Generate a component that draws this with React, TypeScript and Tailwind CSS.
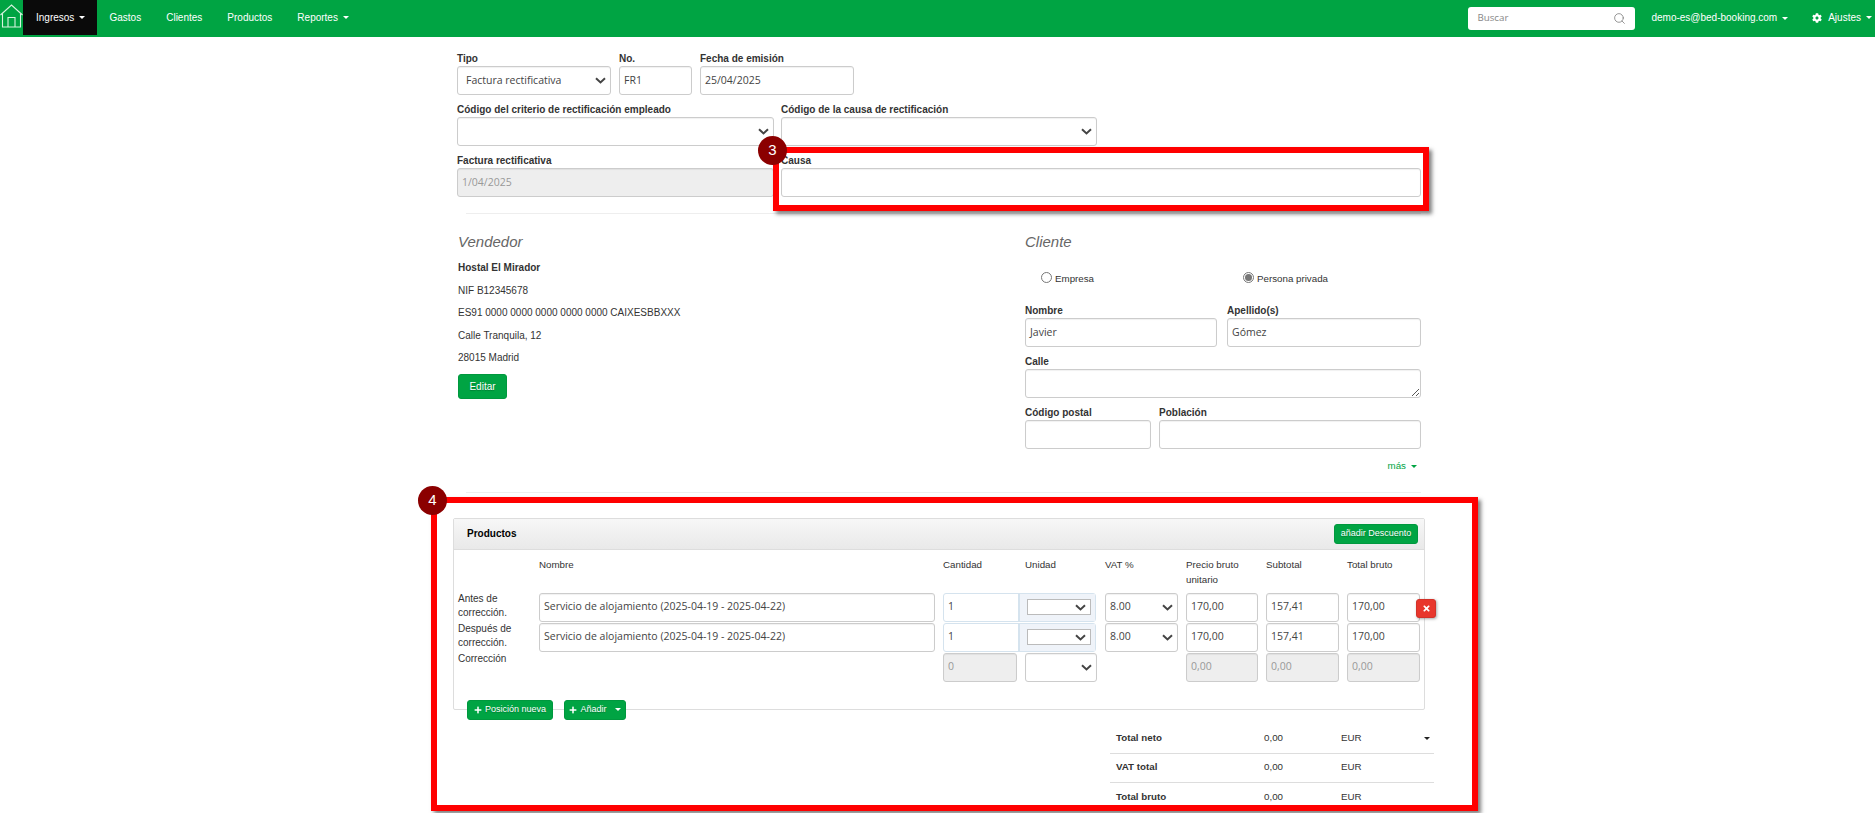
import React from "react";
import { Search } from "lucide-react";
import { FaCog, FaPlus, FaTimes } from "react-icons/fa";

const Caret = ({ c = "border-t-white" }: { c?: string }) => (
  <span className={`inline-block w-0 h-0 ml-[5px] align-middle border-x-[3px] border-x-transparent border-t-[3px] ${c}`} />
);

const Chevron = () => (
  <svg width="11" height="7" viewBox="0 0 11 7" className="shrink-0">
    <path d="M1 1.2 L5.5 5.4 L10 1.2" fill="none" stroke="#444" strokeWidth="2" />
  </svg>
);

const inputFont = "font-['Open_Sans',sans-serif] text-[10.5px] text-[#444]";

const Box = ({ w, h = "h-[29px]", value, disabled, select, className = "" }: { w: string; h?: string; value?: string; disabled?: boolean; select?: boolean; className?: string }) => (
  <div className={`${w} ${h} ${inputFont} ${disabled ? "bg-[#eeeeee] text-[#999]" : "bg-white"} flex items-center justify-between border border-[#cccccc] rounded-[3px] shadow-[inset_0_1px_1px_rgba(0,0,0,0.06)] pl-[4px] pr-[4px] shrink-0 ${className}`}>
    <span className="whitespace-nowrap">{value}</span>
    {select && <Chevron />}
  </div>
);

const Field = ({ label, w, value, disabled, select, pad }: { label: string; w: string; value?: string; disabled?: boolean; select?: boolean; pad?: boolean }) => (
  <div className={`${w} shrink-0`}>
    <div className="h-[13px] leading-[13px] mb-px font-bold text-[10px] text-[#333] whitespace-nowrap">{label}</div>
    <Box w="w-full" value={value} disabled={disabled} select={select} className={pad ? "pl-[8px]" : ""} />
  </div>
);

const HeadCell = ({ children }: { children: React.ReactNode }) => <div className="text-[9.75px] leading-[15px] text-[#333]">{children}</div>;

const RowLabel = ({ children }: { children: React.ReactNode }) => <div className="-mt-px pl-[4px] text-[10px] leading-[14.5px] text-[#333]">{children}</div>;

const Group = ({ value }: { value: string }) => (
  <div className="col-span-2 flex h-[29px] border border-[#d5e3ee] rounded-[3px] w-[153px]">
    <div className={`w-[76px] h-full flex items-center pl-[4px] border-r-2 border-[#d5e3ee] ${inputFont}`}>{value}</div>
    <div className="flex-1 bg-[#eff3f9] flex items-center pl-[7px]">
      <div className="w-[64px] h-[16px] bg-white border border-[#bbbbbb] flex items-center justify-end pr-[4px]"><Chevron /></div>
    </div>
  </div>
);

const GreenBtn = ({ children, className = "" }: { children: React.ReactNode; className?: string }) => (
  <div className={`bg-[#00a443] border border-[#00983e] rounded-[3px] text-white text-[9px] [text-shadow:0_1px_1px_rgba(0,0,0,0.25)] flex items-center justify-center whitespace-nowrap ${className}`}>{children}</div>
);

const TotalRow = ({ label, caret, last }: { label: string; caret?: boolean; last?: boolean }) => (
  <div className={`flex items-center h-[29px] text-[9.75px] text-[#333] ${last ? "" : "border-b border-[#dddddd]"}`}>
    <div className="w-[154px] pl-[6px] font-bold">{label}</div>
    <div className="w-[77px]">0,00</div>
    <div className="w-[83px]">EUR</div>
    {caret && <span className="inline-block w-0 h-0 border-x-[3px] border-x-transparent border-t-[3px] border-t-[#222]" />}
  </div>
);

const NavItem = ({ children }: { children: React.ReactNode }) => <div className="px-[12.5px] flex items-center h-full whitespace-nowrap">{children}</div>;

const Marker = ({ n, className }: { n: string; className: string }) => (
  <div className={`absolute w-[29px] h-[29px] rounded-full bg-[#8b0000] text-white text-[15px] flex items-center justify-center ${className}`}>{n}</div>
);

export default function App() {
  return (
    <div className="relative h-[813px] w-[1875px] overflow-hidden bg-white font-['Liberation_Sans',Arial,sans-serif] text-[#333]">
      {/* Navbar */}
      <div className="h-[37px] bg-[#00a443] flex items-start text-white text-[10px]">
        <svg width="23" height="24" viewBox="0 0 23 24" className="mt-[4px] shrink-0" fill="none" stroke="#d8f3e0" strokeWidth="1.1">
          <path d="M0.5 11 L11.5 1 L22.5 11" />
          <path d="M2.5 9.5 V23 H20.5 V9.5" />
          <path d="M8 23 V13.5 H15 V23" />
        </svg>
        <div className="w-[74px] h-[35px] bg-[#0a0a0a] flex items-center pl-[13px] shrink-0">Ingresos<Caret /></div>
        <div className="flex items-center h-[35px]">
          <NavItem>Gastos</NavItem>
          <NavItem>Clientes</NavItem>
          <NavItem>Productos</NavItem>
          <NavItem>Reportes<Caret /></NavItem>
        </div>
        <div className="ml-auto flex items-center h-[35px]">
          <div className="w-[167px] h-[23px] mt-[1px] bg-white rounded-[3px] flex items-center justify-between pl-[9px] pr-[9px] text-[#888] text-[9.75px] font-['Open_Sans',sans-serif]">
            <span>Buscar</span>
            <Search size={13} strokeWidth={1.4} color="#777" />
          </div>
          <div className="ml-[16px] whitespace-nowrap">demo-es@bed-booking.com<Caret /></div>
          <div className="ml-[24px] mr-[3px] flex items-center whitespace-nowrap"><FaCog size={10} className="mr-[6px]" />Ajustes<Caret /></div>
        </div>
      </div>

      {/* Form */}
      <div className="ml-[457px] w-[964px] pt-[15px]">
        <div className="flex gap-x-[8px]">
          <Field label="Tipo" w="w-[154px]" value="Factura rectificativa" select pad />
          <Field label="No." w="w-[73px]" value="FR1" />
          <Field label="Fecha de emisión" w="w-[154px]" value="25/04/2025" />
        </div>
        <div className="flex gap-x-[7px] mt-[8px]">
          <Field label="Código del criterio de rectificación empleado" w="w-[317px]" select />
          <Field label="Código de la causa de rectificación" w="w-[316px]" select />
        </div>
        <div className="flex gap-x-[7px] mt-[8px]">
          <Field label="Factura rectificativa" w="w-[317px]" value="1/04/2025" disabled />
          <Field label="Causa" w="w-[640px]" />
        </div>
        <div className="h-px bg-[#eeeeee] ml-[9px] mt-[16px]" />

        <div className="flex mt-[18px]">
          <div className="w-[568px] shrink-0">
            <div className="h-[20px] leading-[20px] italic text-[15px] text-[#666] pl-px">Vendedor</div>
            <div className="mt-[5px] text-[10px] leading-[22.6px] pl-px">
              <div className="font-bold">Hostal El Mirador</div>
              <div>NIF B12345678</div>
              <div>ES91 0000 0000 0000 0000 0000 CAIXESBBXXX</div>
              <div>Calle Tranquila, 12</div>
              <div>28015 Madrid</div>
            </div>
            <GreenBtn className="w-[49px] h-[25px] mt-[4px] ml-px text-[10px]">Editar</GreenBtn>
          </div>
          <div className="w-[396px] shrink-0">
            <div className="h-[20px] leading-[20px] italic text-[15px] text-[#666]">Cliente</div>
            <div className="flex items-center h-[14px] mt-[20px] text-[9.75px]">
              <span className="ml-[16px] w-[11px] h-[11px] rounded-full border border-[#777] bg-white -mt-[3px]" />
              <span className="ml-[3px]">Empresa</span>
              <span className="ml-[149px] w-[11px] h-[11px] rounded-full border border-[#777] bg-white flex items-center justify-center -mt-[3px]">
                <span className="w-[7px] h-[7px] rounded-full bg-[#777]" />
              </span>
              <span className="ml-[3px]">Persona privada</span>
            </div>
            <div className="flex gap-x-[10px] mt-[18px]">
              <Field label="Nombre" w="w-[192px]" value="Javier" />
              <Field label="Apellido(s)" w="w-[194px]" value="Gómez" />
            </div>
            <div className="mt-[8px] relative">
              <Field label="Calle" w="w-full" />
              <svg width="8" height="8" viewBox="0 0 8 8" className="absolute right-[2px] bottom-[2px]" stroke="#444" strokeWidth="0.9">
                <path d="M1 8 L8 1 M5 8 L8 5" />
              </svg>
            </div>
            <div className="flex gap-x-[8px] mt-[7.5px]">
              <Field label="Código postal" w="w-[126px]" />
              <Field label="Población" w="w-[262px]" />
            </div>
            <div className="h-[13px] leading-[13px] mt-[10.5px] pr-[4px] text-right text-[9.75px] text-[#00a443]">más<Caret c="border-t-[#00a443]" /></div>
          </div>
        </div>
        <div className="h-px bg-[#eeeeee] ml-[9px] mt-[19.5px]" />

        {/* Products panel */}
        <div className="relative -ml-[4px] w-[972px] h-[192px] mt-[25px] border border-[#dddddd] rounded-[2px]">
          <div className="h-[31px] flex items-center justify-between pl-[13px] pr-[6px] border-b border-[#dddddd] bg-gradient-to-b from-[#f7f7f7] to-[#e9e9e9]">
            <span className="font-bold text-[10px] text-black">Productos</span>
            <GreenBtn className="w-[84px] h-[20px]">añadir Descuento</GreenBtn>
          </div>
          <div className="relative grid grid-cols-[77px_396px_74px_72px_73px_72px_73px_73px] gap-x-[8px] gap-y-px mt-[7px]">
            <div className="h-[35px]" />
            <HeadCell>Nombre</HeadCell>
            <HeadCell>Cantidad</HeadCell>
            <HeadCell>Unidad</HeadCell>
            <HeadCell>VAT %</HeadCell>
            <HeadCell>Precio bruto unitario</HeadCell>
            <HeadCell>Subtotal</HeadCell>
            <HeadCell>Total bruto</HeadCell>

            <RowLabel>Antes de corrección.</RowLabel>
            <Box w="w-full" value="Servicio de alojamiento (2025-04-19 - 2025-04-22)" />
            <Group value="1" />
            <Box w="w-full" value="8.00" select />
            <Box w="w-full" value="170,00" />
            <Box w="w-full" value="157,41" />
            <Box w="w-full" value="170,00" />

            <RowLabel>Después de corrección.</RowLabel>
            <Box w="w-full" value="Servicio de alojamiento (2025-04-19 - 2025-04-22)" />
            <Group value="1" />
            <Box w="w-full" value="8.00" select />
            <Box w="w-full" value="170,00" />
            <Box w="w-full" value="157,41" />
            <Box w="w-full" value="170,00" />

            <RowLabel>Corrección</RowLabel>
            <div />
            <Box w="w-full" value="0" disabled />
            <Box w="w-full" select />
            <div />
            <Box w="w-full" value="0,00" disabled />
            <Box w="w-full" value="0,00" disabled />
            <Box w="w-full" value="0,00" disabled />

            <div className="absolute left-[962px] top-[42px] w-[20px] h-[19px] rounded-[3px] bg-[#e8362c] border border-[#d2322a] flex items-center justify-center text-white shadow-[1px_1px_3px_rgba(0,0,0,0.35)]">
              <FaTimes size={9} />
            </div>
          </div>
        </div>
        <div className="relative flex gap-x-[11px] -mt-[10px] ml-[10px]">
          <GreenBtn className="w-[86px] h-[20px] gap-[3px]"><FaPlus size={8} />Posición nueva</GreenBtn>
          <GreenBtn className="w-[62px] h-[20px] gap-[3px]"><FaPlus size={8} />Añadir<Caret /></GreenBtn>
        </div>
        <div className="w-[324px] ml-[653px] mt-[5px]">
          <TotalRow label="Total neto" caret />
          <TotalRow label="VAT total" />
          <TotalRow label="Total bruto" last />
        </div>
      </div>

      {/* Annotations */}
      <div className="absolute left-[773px] top-[147px] w-[656px] h-[64px] border-[6px] border-[#ff0000] shadow-[3px_3px_4px_rgba(0,0,0,0.5)]" />
      <Marker n="3" className="left-[758px] top-[136px]" />
      <div className="absolute left-[431px] top-[497px] w-[1047px] h-[314px] border-[6px] border-[#ff0000] shadow-[3px_3px_4px_rgba(0,0,0,0.5)]" />
      <Marker n="4" className="left-[418px] top-[486px]" />
    </div>
  );
}
